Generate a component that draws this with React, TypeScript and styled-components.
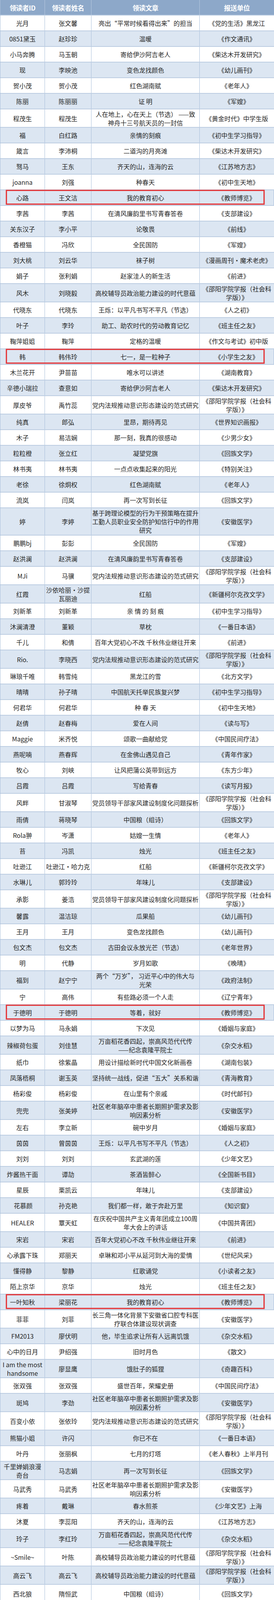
import React from "react";
import styled, { createGlobalStyle } from "styled-components";

const Global = createGlobalStyle`
  html, body { margin: 0; padding: 0; background: #ffffff; }
  body { font-family: "Noto Sans CJK SC", "Noto Sans", sans-serif; }
`;

type Item = { id: string; name: string; title: string; unit: string; h?: number; mark?: boolean };

const SY = "《邵阳学院学报（社会科\n学版）》";
const SQ = "社区老年脑卒中患者长期照护需求及影\n响因素分析";
const DN = "党内法规推动意识形态建设的范式研究";
const JF = "党员领导干部家风建设制度化问题探析";
const GX = "高校辅导员政治能力建设的时代意蕴";
const YL = "万亩稻花香四起，崇高风范代代传\n——纪念袁隆平院士";

const data: Item[] = [
  { id: "光月", name: "张文馨", title: "亮出“平常时候看得出来”的担当", unit: "《党的生活》黑龙江" },
  { id: "0851黛玉", name: "赵珍珍", title: "温暖", unit: "《作文通讯》" },
  { id: "小马奔腾", name: "马玉朝", title: "寄给伊沙阿吉老人", unit: "《柴达木开发研究》" },
  { id: "现", name: "李映池", title: "变色龙找颜色", unit: "《幼儿画刊》" },
  { id: "贺小茂", name: "贺小茂", title: "红色湖南赋", unit: "《老年人》" },
  { id: "陈丽", name: "陈丽丽", title: "证 明", unit: "《军嫂》" },
  { id: "程茂生", name: "程茂生", title: "人在地上，心在天上（节选） ——致\n神舟十三号航天员的一封信", unit: "《黄金时代》中学生版" },
  { id: "福", name: "白红路", title: "亲情的刻痕", unit: "《初中生学习指导》" },
  { id: "箴言", name: "李沛桐", title: "二道沟的月亮滩", unit: "《柴达木开发研究》" },
  { id: "驽马", name: "王东", title: "齐天的山，连海的云", unit: "《江苏地方志》" },
  { id: "joanna", name: "刘强", title: "种春天", unit: "《初中生天地》" },
  { id: "心路", name: "王文洁", title: "我的教育初心", unit: "《教师博览》", mark: true },
  { id: "李茜", name: "李茜", title: "在清风廉韵里书写青春答卷", unit: "《支部建设》" },
  { id: "关东汉子", name: "李小平", title: "论敬畏", unit: "《前线》" },
  { id: "香橙猫", name: "冯欣", title: "全民国防", unit: "《军嫂》" },
  { id: "刘大桃", name: "刘云华", title: "袜子树", unit: "《漫画周刊·魔术老虎》" },
  { id: "娟子", name: "张利娟", title: "赵家洼人的新生活", unit: "《前进》" },
  { id: "风木", name: "刘晓毅", title: GX, unit: SY },
  { id: "代晓东", name: "代晓东", title: "王烁：以平凡书写不平凡（节选）", unit: "《人之初》" },
  { id: "叶子", name: "李玲", title: "助工、助农时代的劳动教育记忆", unit: "《班主任之友》" },
  { id: "鞠萍姐姐", name: "鞠萍", title: "定格的温暖", unit: "《作文与考试》初中版" },
  { id: "韩", name: "韩伟玲", title: "七一，是一粒种子", unit: "《小学生之友》", mark: true },
  { id: "木兰花开", name: "尹苗苗", title: "唯水可以讲述", unit: "《湖南教育》" },
  { id: "辛德小瑞拉", name: "查意如", title: "寄给伊沙阿吉老人", unit: "《柴达木开发研究》" },
  { id: "厚皮爷", name: "禹竹蕊", title: DN, unit: SY },
  { id: "纯真", name: "郎弘", title: "里昂，期待再见", unit: "《世界知识画报》" },
  { id: "木子", name: "易洁娴", title: "那一刻，我真的很感动", unit: "《少男少女》" },
  { id: "粒粒橙", name: "张立红", title: "凝望党旗", unit: "《回族文学》" },
  { id: "林书夷", name: "林书夷", title: "一点点收集起来的阳光", unit: "《特别关注》" },
  { id: "老徐", name: "徐炯权", title: "红色湖南赋", unit: "《老年人》" },
  { id: "流岚", name: "闫岚", title: "再一次写到长征", unit: "《回族文学》" },
  { id: "婷", name: "李婷", title: "基于跨理论模型的行为干预策略在提升\n工勤人员职业安全防护知信行中的作用\n研究", unit: "《安徽医学》" },
  { id: "鹏鹏bj", name: "彭彭", title: "全民国防", unit: "《军嫂》" },
  { id: "赵洪澜", name: "赵洪澜", title: "在清风廉韵里书写青春答卷", unit: "《支部建设》" },
  { id: "MJi", name: "马骥", title: DN, unit: SY },
  { id: "红霞", name: "沙依哈丽·沙提\n瓦丽迪", title: "红船", unit: "《新疆柯尔克孜文学》" },
  { id: "刘新革", name: "刘新革", title: "亲 情 的 刻 痕", unit: "《初中生学习指导》" },
  { id: "沐澜清澄", name: "董颖", title: "草枕", unit: "《一番日本语》" },
  { id: "千儿", name: "和倩", title: "百年大党初心不改 千秋伟业继往开来", unit: "《前进》" },
  { id: "Rio.", name: "李晓西", title: DN, unit: SY },
  { id: "琳琅千唯", name: "韩雪纯", title: "黑龙江的雪", unit: "《北方文学》" },
  { id: "晴晴", name: "孙子晴", title: "中国航天托举民族复兴梦", unit: "《初中生学习指导》" },
  { id: "何君华", name: "何君华", title: "种 春 天", unit: "《初中生天地》" },
  { id: "赵倩", name: "赵春梅", title: "爱在人间", unit: "《读与写》" },
  { id: "Maggie", name: "米齐悦", title: "颂歌一曲献给党", unit: "《中国民间疗法》" },
  { id: "燕呢喃", name: "燕春辉", title: "在金佛山遇见自己", unit: "《青年作家》" },
  { id: "牧心", name: "刘峡", title: "让风把蒲公英带到远方", unit: "《东方少年》" },
  { id: "吕霞", name: "吕霞", title: "写给青春", unit: "《读写月报》" },
  { id: "风畔", name: "甘淑琴", title: JF, unit: SY },
  { id: "雨倩", name: "蒋晓琴", title: "中国粮（组诗）", unit: "《回族文学》" },
  { id: "Rola翀", name: "岑潇", title: "姑嫂一生情", unit: "《老年人》" },
  { id: "苔", name: "冯凯", title: "烛光", unit: "《班主任之友》" },
  { id: "吐逊江", name: "吐逊江·哈力克", title: "红船", unit: "《新疆柯尔克孜文学》" },
  { id: "水琳儿", name: "郭玲玲", title: "年味儿", unit: "《支部建设》" },
  { id: "承影", name: "姜浩", title: JF, unit: SY },
  { id: "馨露", name: "温洁琼", title: "瓜果船", unit: "《幼儿画刊》" },
  { id: "王月", name: "王月", title: "变色龙找颜色", unit: "《幼儿画刊》" },
  { id: "包文杰", name: "包文杰", title: "古田会议永放光芒（节选）", unit: "《老年世界》" },
  { id: "明", name: "代静", title: "岁月如歌", unit: "《晚晴》" },
  { id: "福到", name: "赵宁宁", title: "两个“万岁”， 习近平心中的伟大与\n光荣", unit: "《政府法制》" },
  { id: "宁", name: "高伟", title: "有些路必须一个人走", unit: "《辽宁青年》" },
  { id: "于德明", name: "于德明", title: "等着，就好", unit: "《教师博览》", mark: true },
  { id: "以梦为马", name: "马永娟", title: "下次见", unit: "《婚姻与家庭》" },
  { id: "辣椒荷包蛋", name: "刘佳慧", title: YL, unit: "《杂交水稻》" },
  { id: "纸巾", name: "徐紫晶", title: "用设计描绘新时代中国文化新画卷", unit: "《湖南包装》" },
  { id: "凤落梧桐", name: "谢玉英", title: "坚持统一战线，促进“五大”关系和谐", unit: "《青海教育》" },
  { id: "杨彩俊", name: "杨彩俊", title: "在山里有个亲戚", unit: "《时代邮刊》" },
  { id: "兜兜", name: "张美婷", title: SQ, unit: "《安徽医学》" },
  { id: "左右", name: "李立新", title: "碗中岁月", unit: "《婚姻与家庭》" },
  { id: "茵茵", name: "曾茵茵", title: "王烁：以平凡书写不平凡（节选）", unit: "《人之初》" },
  { id: "刘刘", name: "刘刘", title: "玄武湖的莲", unit: "《少年文艺》" },
  { id: "炸酱热干面", name: "谭劼", title: "茶酒皆醉心", unit: "《全国新书目》" },
  { id: "星辰", name: "栗凯云", title: "年味儿", unit: "《支部建设》" },
  { id: " 花慕颜", name: "孙克艳", title: "我们都一样，敢于奔赴万里", unit: "《知识窗》" },
  { id: "HEALER", name: "覃天虹", title: "在庆祝中国共产主义青年团成立100周\n年大会上的讲话", unit: "《中国共青团》" },
  { id: "宋岩", name: "宋岩", title: "百年大党初心不改 千秋伟业继往开来", unit: "《前进》" },
  { id: "心承露下珠", name: "郑丽天", title: "卓琳和邓小平从延河到大海的爱情", unit: "《世纪风采》" },
  { id: "懂得静", name: "黎静", title: "红歌诵党", unit: "《小读者之友》" },
  { id: "陌上京华", name: "京华", title: "烛光", unit: "《班主任之友》" },
  { id: "一叶知秋", name: "梁丽花", title: "我的教育初心", unit: "《教师博览》", mark: true },
  { id: "菲菲", name: "刘菲", title: "长三角一体化背景下安徽省口腔专科医\n疗联合体建设现状调查", unit: "《安徽医学》" },
  { id: "FM2013", name: "廖伏明", title: "他，毕生追求让所有人远离饥饿", unit: "《杂交水稻》" },
  { id: "心中的日月", name: "尹绍强", title: "旧时月色", unit: "《散文》" },
  { id: "I am the most\nhandsome", name: "廖显鹰", title: "饿肚子的狐狸", unit: "《奇趣百科》" },
  { id: "张双强", name: "张双强", title: "盛世百年，荣耀史册", unit: "《中国民间疗法》" },
  { id: "斑鸠", name: "李劲", title: SQ, unit: "《安徽医学》" },
  { id: "百变小依", name: "张依玲", title: DN, unit: SY },
  { id: "熊猫小姐", name: "许闪", title: "你已不在", unit: "《一番日本语》" },
  { id: "叶丹", name: "张丽枫", title: "七月的灯塔", unit: "《老人春秋》上半月刊" },
  { id: "千里婵娟浪漫\n奇台", name: "马志娟", title: "再一次写到长征", unit: "《回族文学》" },
  { id: "马武秀", name: "马武秀", title: SQ, unit: "《安徽医学》" },
  { id: "疼着", name: "戴琳", title: "春水煎茶", unit: "《少年文艺》上海" },
  { id: "沐夏", name: "李蕊阳", title: "齐天的山，连海的云", unit: "《江苏地方志》" },
  { id: "玲子", name: "李红玲", title: YL, unit: "《杂交水稻》" },
  { id: "~Smile~", name: "叶陈", title: GX, unit: SY },
  { id: "高云飞", name: "高云飞", title: GX, unit: SY },
  { id: "西北狼", name: "隋恒武", title: "中国粮（组诗）", unit: "《回族文学》", h: 47 },
  { id: "许雨欣", name: "许雨欣", title: JF, unit: SY },
  { id: "莫上心", name: "张敏", title: "下次见", unit: "《婚姻与家庭》" },
  { id: "Yanliu", name: "刘燕", title: "低头走路的人（节选）", unit: "《散文·海外版》" },
];

const Page = styled.div`
  width: 701px;
  padding-bottom: 3px;
  background: #ffffff;
`;

const Table = styled.div`
  display: flex;
  flex-direction: column;
  width: 701px;
  border-left: 1px solid #a9bfda;
  box-sizing: border-box;
`;

const Row = styled.div<{ $h: number; $alt: boolean }>`
  position: relative;
  display: grid;
  grid-template-columns: 114px 119px 277px minmax(0, 1fr);
  grid-template-rows: minmax(0, 1fr);
  height: ${(p) => p.$h}px;
  flex: 0 0 ${(p) => p.$h}px;
  box-sizing: border-box;
  border-bottom: 2px solid #bccde2;
  background: ${(p) => (p.$alt ? "#dce6f2" : "#ffffff")};
`;

const HeadRow = styled.div`
  display: grid;
  grid-template-columns: 114px 119px 277px minmax(0, 1fr);
  height: 40px;
  flex: 0 0 40px;
  box-sizing: border-box;
  background: #8da8c9;
  border-bottom: 2px solid #c3d3e6;
`;

const HeadCell = styled.div`
  display: flex;
  align-items: center;
  justify-content: center;
  color: #ffffff;
  font-size: 17px;
  font-weight: 700;
  letter-spacing: -0.5px;
  border-right: 1px solid #b7c9df;
  &:last-child { border-right: none; }
`;

const Cell = styled.div`
  display: flex;
  align-items: center;
  justify-content: center;
  text-align: center;
  white-space: pre;
  font-size: 16px;
  line-height: 22px;
  color: #262626;
  min-height: 0;
  min-width: 0;
  border-right: 1px solid #a9bfda;
  &:last-child { border-right: none; }
`;

const Mark = styled.div`
  position: absolute;
  left: 14px;
  right: 24px;
  top: -1px;
  bottom: 1px;
  border: 3px solid #e4393c;
  box-shadow: 0 0 2px rgba(228, 57, 60, 0.55);
  pointer-events: none;
`;

function rowHeight(it: Item): number {
  if (it.h) return it.h;
  const lines = Math.max(
    ...[it.id, it.name, it.title, it.unit].map((s) => s.split("\n").length)
  );
  return lines === 1 ? 40 : lines === 2 ? 47 : 70;
}

export default function App() {
  return (
    <Page>
      <Global />
      <Table>
        <HeadRow>
          <HeadCell>领读者ID</HeadCell>
          <HeadCell>领读者姓名</HeadCell>
          <HeadCell>领读文章</HeadCell>
          <HeadCell>报送单位</HeadCell>
        </HeadRow>
        {data.map((it, i) => (
          <Row key={i} $h={rowHeight(it)} $alt={i % 2 === 1}>
            <Cell>{it.id}</Cell>
            <Cell>{it.name}</Cell>
            <Cell>{it.title}</Cell>
            <Cell>{it.unit}</Cell>
            {it.mark && <Mark />}
          </Row>
        ))}
      </Table>
    </Page>
  );
}
